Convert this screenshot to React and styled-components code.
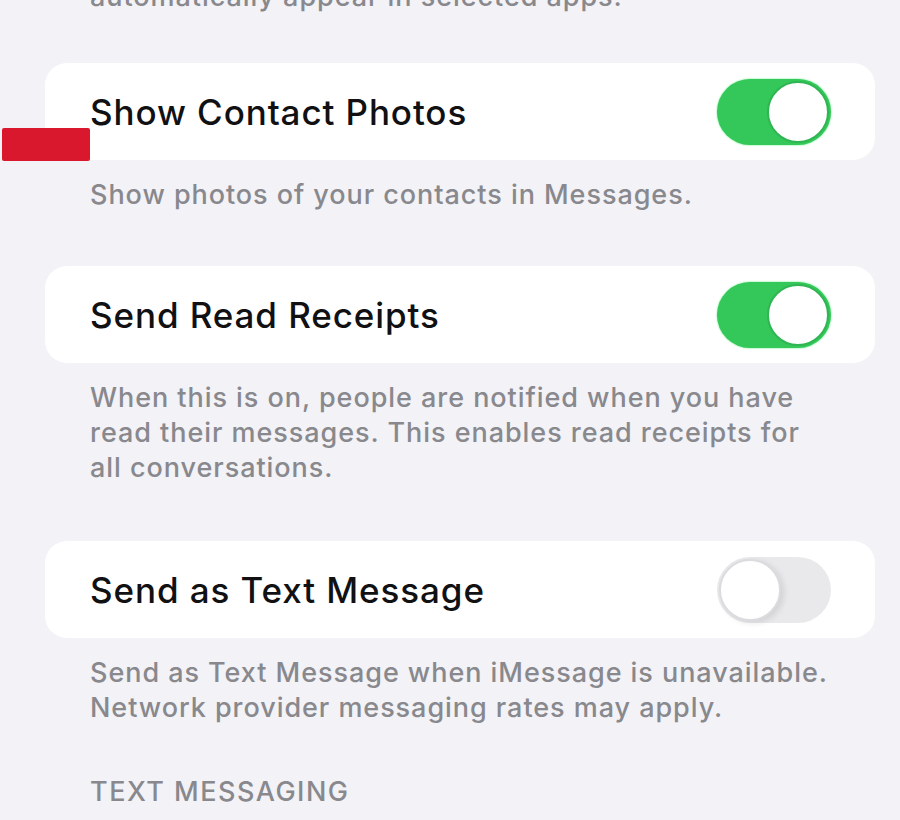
import React from "react";
import styled, { createGlobalStyle } from "styled-components";

const GlobalStyle = createGlobalStyle`
  html, body {
    margin: 0;
    padding: 0;
    background: #f2f2f7;
  }
  body {
    font-family: Inter, "Noto Sans", "Liberation Sans", sans-serif;
    -webkit-font-smoothing: antialiased;
  }
`;

const Page = styled.div`
  position: relative;
  width: 900px;
  height: 820px;
  overflow: hidden;
  background: #f2f2f7;
  padding: 0 25px 0 45px;
  box-sizing: border-box;
`;

const Footer = styled.div`
  padding: ${(p) => (p.$top ? "0" : "17px")} 45px 0 45px;
  margin-top: ${(p) => (p.$top ? "-21px" : "0")};
  margin-bottom: ${(p) => p.$gap || 54}px;
  font-size: 27px;
  font-weight: 500;
  line-height: 35px;
  color: #88888d;
  letter-spacing: 0.95px;
  white-space: nowrap;
`;

const Card = styled.div`
  display: flex;
  align-items: center;
  justify-content: space-between;
  height: 97px;
  padding: 0 44px 0 45px;
  background: #ffffff;
  border-radius: 22px;
`;

const Label = styled.span`
  font-size: 35px;
  font-weight: 500;
  color: #111113;
  letter-spacing: 0.9px;
`;

const Track = styled.div`
  position: relative;
  width: 114px;
  height: 66px;
  border-radius: 33px;
  background: ${(p) => (p.$on ? "#34c759" : "#e9e9eb")};
  box-shadow: ${(p) => (p.$on ? "0 0 2px #4ee874" : "none")};
`;

const Knob = styled.div`
  position: absolute;
  top: 2px;
  left: ${(p) => (p.$on ? "50px" : "2px")};
  width: 62px;
  height: 62px;
  border-radius: 50%;
  background: #ffffff;
  box-sizing: border-box;
  border: 2px solid ${(p) => (p.$on ? "#2fb552" : "#dcdce0")};
  box-shadow: ${(p) =>
    p.$on ? "none" : "3px 2px 6px rgba(0, 0, 0, 0.1)"};
`;

const Section = styled.div`
  padding: 0 45px;
  font-size: 27px;
  font-weight: 500;
  line-height: 35px;
  color: #88888d;
  text-transform: uppercase;
  letter-spacing: 1.5px;
`;

const Marker = styled.div`
  position: absolute;
  left: 2px;
  top: 128px;
  width: 88px;
  height: 33px;
  background: #d9182e;
  border-radius: 2px;
`;

const Toggle = ({ on }) => (
  <Track $on={on}>
    <Knob $on={on} />
  </Track>
);

const rows = [
  {
    label: "Show Contact Photos",
    on: true,
    note: ["Show photos of your contacts in Messages."],
  },
  {
    label: "Send Read Receipts",
    on: true,
    note: [
      "When this is on, people are notified when you have",
      "read their messages. This enables read receipts for",
      "all conversations.",
    ],
    gap: 56,
  },
  {
    label: "Send as Text Message",
    on: false,
    note: [
      "Send as Text Message when iMessage is unavailable.",
      "Network provider messaging rates may apply.",
    ],
    gap: 49,
  },
];

export default function App() {
  return (
    <>
      <GlobalStyle />
      <Page>
        <Footer $top $gap={49}>
          automatically appear in selected apps.
        </Footer>
        {rows.map((r) => (
          <React.Fragment key={r.label}>
            <Card>
              <Label>{r.label}</Label>
              <Toggle on={r.on} />
            </Card>
            <Footer $gap={r.gap}>
              {r.note.map((line) => (
                <div key={line}>{line}</div>
              ))}
            </Footer>
          </React.Fragment>
        ))}
        <Section>Text Messaging</Section>
        <Marker />
      </Page>
    </>
  );
}
